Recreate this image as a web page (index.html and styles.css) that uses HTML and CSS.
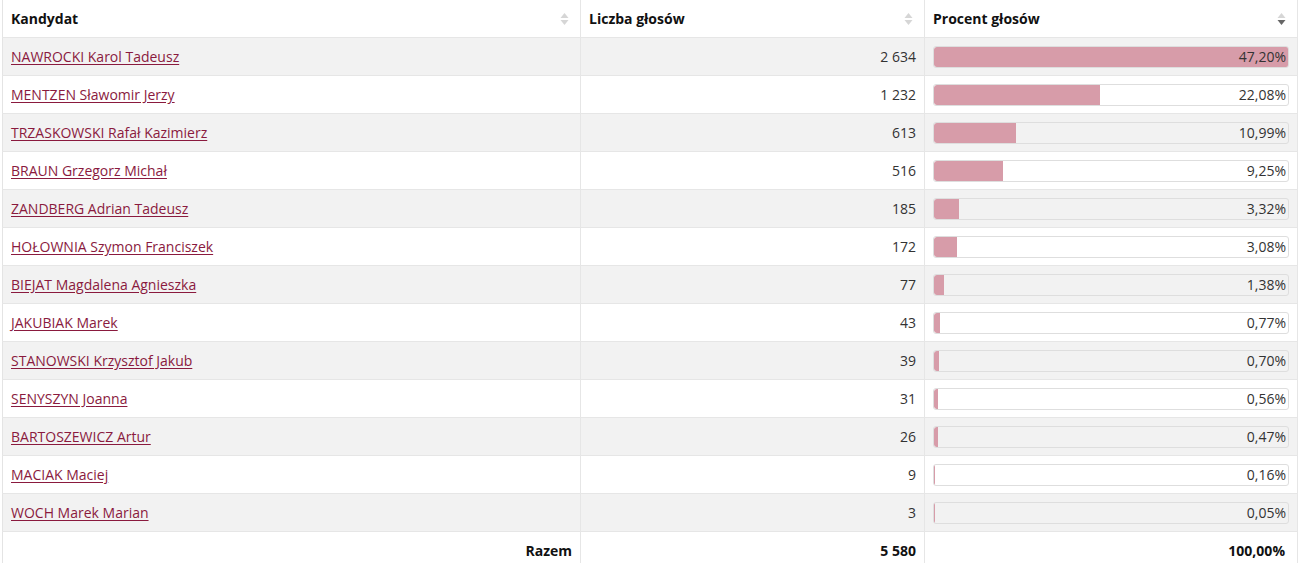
FILE: index.html
```html
<!DOCTYPE html>
<html lang="pl">
<head>
<meta charset="utf-8">
<title>Wyniki</title>
<link rel="stylesheet" href="styles.css">
</head>
<body>
<div class="wrap">
<table class="results">
  <colgroup>
    <col class="c-name">
    <col class="c-votes">
    <col class="c-pct">
  </colgroup>
  <thead>
    <tr>
      <th><div class="th-in"><span>Kandydat</span><svg class="sort" width="9" height="14" viewBox="0 0 9 14"><path d="M4.5 1 L8.5 6 H0.5 Z" fill="#d6d6d6"/><path d="M4.5 13 L8.5 8 H0.5 Z" fill="#d6d6d6"/></svg></div></th>
      <th><div class="th-in"><span>Liczba głosów</span><svg class="sort" width="9" height="14" viewBox="0 0 9 14"><path d="M4.5 1 L8.5 6 H0.5 Z" fill="#d6d6d6"/><path d="M4.5 13 L8.5 8 H0.5 Z" fill="#d6d6d6"/></svg></div></th>
      <th><div class="th-in"><span>Procent głosów</span><svg class="sort" width="9" height="14" viewBox="0 0 9 14"><path d="M4.5 1 L8.5 6 H0.5 Z" fill="#d6d6d6"/><path d="M4.5 13 L8.5 8 H0.5 Z" fill="#666"/></svg></div></th>
    </tr>
  </thead>
  <tbody>
    <tr><td><a href="#">NAWROCKI Karol Tadeusz</a></td><td class="num">2 634</td><td class="bar-cell"><div class="bar"><div class="fill" style="width:100%"></div><span class="pct">47,20%</span></div></td></tr>
    <tr><td><a href="#">MENTZEN Sławomir Jerzy</a></td><td class="num">1 232</td><td class="bar-cell"><div class="bar"><div class="fill" style="width:46.78%"></div><span class="pct">22,08%</span></div></td></tr>
    <tr><td><a href="#">TRZASKOWSKI Rafał Kazimierz</a></td><td class="num">613</td><td class="bar-cell"><div class="bar"><div class="fill" style="width:23.28%"></div><span class="pct">10,99%</span></div></td></tr>
    <tr><td><a href="#">BRAUN Grzegorz Michał</a></td><td class="num">516</td><td class="bar-cell"><div class="bar"><div class="fill" style="width:19.6%"></div><span class="pct">9,25%</span></div></td></tr>
    <tr><td><a href="#">ZANDBERG Adrian Tadeusz</a></td><td class="num">185</td><td class="bar-cell"><div class="bar"><div class="fill" style="width:7.03%"></div><span class="pct">3,32%</span></div></td></tr>
    <tr><td><a href="#">HOŁOWNIA Szymon Franciszek</a></td><td class="num">172</td><td class="bar-cell"><div class="bar"><div class="fill" style="width:6.53%"></div><span class="pct">3,08%</span></div></td></tr>
    <tr><td><a href="#">BIEJAT Magdalena Agnieszka</a></td><td class="num">77</td><td class="bar-cell"><div class="bar"><div class="fill" style="width:2.92%"></div><span class="pct">1,38%</span></div></td></tr>
    <tr><td><a href="#">JAKUBIAK Marek</a></td><td class="num">43</td><td class="bar-cell"><div class="bar"><div class="fill" style="width:1.63%"></div><span class="pct">0,77%</span></div></td></tr>
    <tr><td><a href="#">STANOWSKI Krzysztof Jakub</a></td><td class="num">39</td><td class="bar-cell"><div class="bar"><div class="fill" style="width:1.48%"></div><span class="pct">0,70%</span></div></td></tr>
    <tr><td><a href="#">SENYSZYN Joanna</a></td><td class="num">31</td><td class="bar-cell"><div class="bar"><div class="fill" style="width:1.19%"></div><span class="pct">0,56%</span></div></td></tr>
    <tr><td><a href="#">BARTOSZEWICZ Artur</a></td><td class="num">26</td><td class="bar-cell"><div class="bar"><div class="fill" style="width:1%"></div><span class="pct">0,47%</span></div></td></tr>
    <tr><td><a href="#">MACIAK Maciej</a></td><td class="num">9</td><td class="bar-cell"><div class="bar"><div class="fill" style="width:0.34%"></div><span class="pct">0,16%</span></div></td></tr>
    <tr><td><a href="#">WOCH Marek Marian</a></td><td class="num">3</td><td class="bar-cell"><div class="bar"><div class="fill" style="width:0.1%"></div><span class="pct">0,05%</span></div></td></tr>
  </tbody>
  <tfoot>
    <tr><td class="num total">Razem</td><td class="num total">5 580</td><td class="num total pct-total">100,00%</td></tr>
  </tfoot>
</table>
</div>
</body>
</html>
```
FILE: styles.css
```css
html, body {
  margin: 0;
  padding: 0;
  background: #fff;
}
body {
  font-family: "Open Sans", "Liberation Sans", sans-serif;
  font-size: 14px;
  color: #333;
}
.wrap {
  padding: 0 4px 0 2px;
}
.results {
  width: 1295px;
  table-layout: fixed;
  border-collapse: collapse;
  border-left: 1px solid #e4e4e4;
  border-right: 1px solid #e4e4e4;
}
.c-name { width: 578px; }
.c-votes { width: 344px; }
.c-pct { width: 373px; }

.results th,
.results td {
  height: 37px;
  padding: 0 8px;
  border-bottom: 1px solid #e6e6e6;
  border-right: 1px solid #e6e6e6;
  vertical-align: middle;
  line-height: 20px;
}
.results th {
  text-align: left;
  font-weight: 700;
  color: #111;
  background: #fff;
}
.th-in {
  display: flex;
  align-items: center;
  justify-content: space-between;
}
.sort {
  display: block;
  margin-right: 3px;
}
.results tbody tr:nth-child(odd) td {
  background: #f2f2f2;
}
.results a {
  color: #8a1a3e;
  text-decoration: underline;
  text-underline-offset: 2px;
}
.num {
  text-align: right;
}
.bar-cell {
  padding: 0 8px 0 8px !important;
}
.bar {
  display: grid;
  height: 20px;
  border: 1px solid #dedede;
  border-radius: 3px;
  overflow: hidden;
}
.fill,
.pct {
  grid-area: 1 / 1;
}
.fill {
  height: 100%;
  background: #d79ca9;
  border-radius: 3px 0 0 3px;
}
.pct {
  text-align: right;
  padding-right: 2px;
  line-height: 20px;
  color: #333;
}
.total {
  font-weight: 700;
  color: #111;
  background: #fff;
}
.pct-total {
  padding-right: 12px !important;
}
```
